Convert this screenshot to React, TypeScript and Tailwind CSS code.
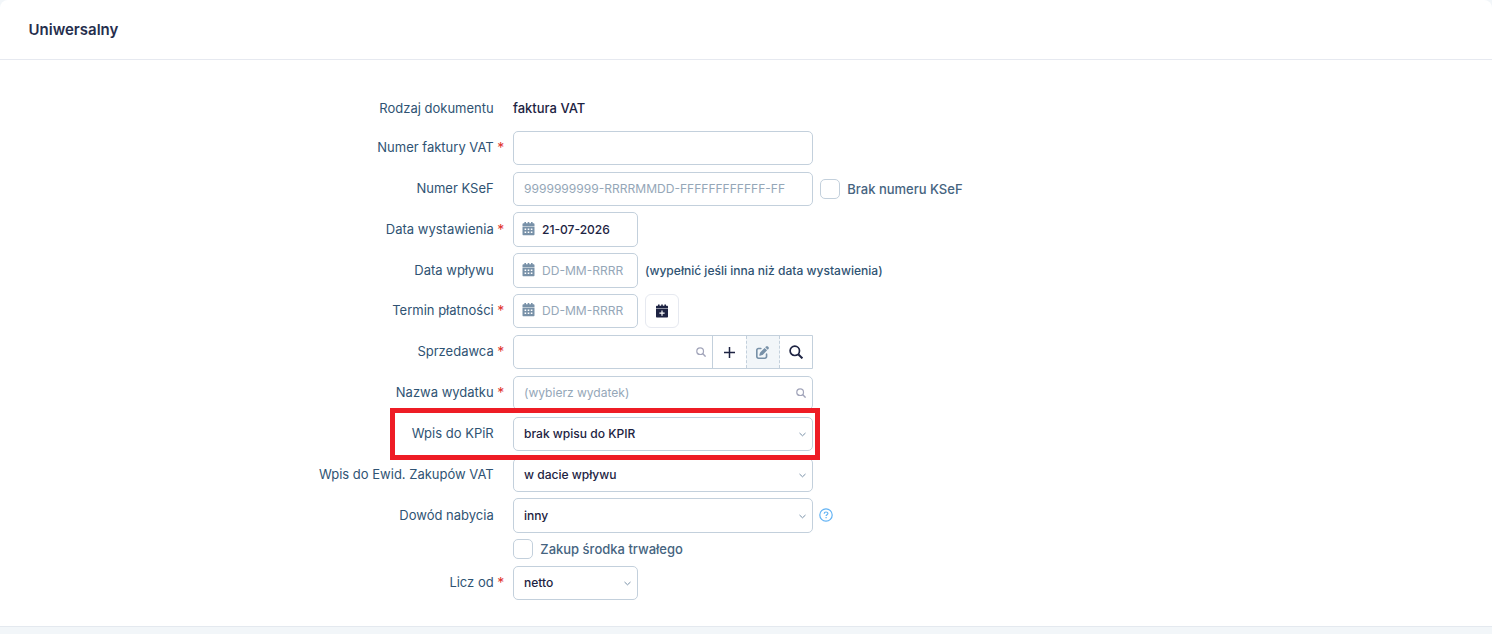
import type { ReactNode } from "react";
import clsx from "clsx";
import { FaPenToSquare } from "react-icons/fa6";

const CalendarIcon = () => (
    <svg width="13" height="14" viewBox="0 0 13 14" className="shrink-0 text-[#7891a8]" fill="currentColor">
        <path
            fillRule="evenodd"
            d="M2.400 0h1.600v1.300h1.700V0h1.600v1.300h1.700V0h1.600v1.300h1c.6 0 .9.3.9.9V4H.5V2.200c0-.6.3-.9.9-.9h1zM.5 4.500h12v7.700c0 .6-.4 1-1 1h-10c-.6 0-1-.4-1-1zM2.600 6.400v1.500h1.600v-1.500zM5.700 6.400v1.500h1.600v-1.500zM8.800 6.400v1.500h1.600v-1.500zM2.600 9.600v1.500h1.600v-1.500zM5.700 9.600v1.500h1.600v-1.500zM8.800 9.600v1.500h1.600v-1.500z"
        />
    </svg>
);

const CalendarPlusIcon = () => (
    <svg width="12" height="14" viewBox="0 0 12 14" fill="currentColor">
        <path
            fillRule="evenodd"
            d="M2 .4h1.600v1.400h1.600V.4h1.600v1.400h1.600V.4H10v1.400h1c.6 0 1 .4 1 1V4.500H0V2.800c0-.6.4-1 1-1h1zM0 5.100h12v7.300c0 .6-.4 1-1 1H1c-.6 0-1-.4-1-1zM5.400 6.600v2H3.400v1.200h2v2h1.200v-2h2V8.600h-2v-2z"
        />
    </svg>
);

const SearchIcon = ({ size, className }: { size: number; className?: string }) => (
    <svg width={size} height={size} viewBox="0 0 14 14" fill="none" stroke="currentColor" strokeWidth="1.7" className={className}>
        <circle cx="5.800" cy="5.800" r="4.700" />
        <path d="M9.200 9.200l4.200 4.200" strokeWidth="2" />
    </svg>
);

const ChevronIcon = () => (
    <svg width="7" height="5" viewBox="0 0 7 5" fill="none" stroke="#7891a8" className="ml-auto shrink-0">
        <path d="M.5 1l3 2.800 3-2.800" />
    </svg>
);

interface RowProps {
    label?: string;
    required?: boolean;
    className?: string;
    labelClassName?: string;
    children: ReactNode;
}

function Row({ label, required, className = "h-[41px]", labelClassName = "leading-[33px]", children }: RowProps) {
    return (
        <div className={clsx("flex items-start", className)}>
            <div className={clsx("flex w-[513px] shrink-0 justify-end text-[13px] text-[#2f5373]", labelClassName)}>
                <span>{label}</span>
                <span className="w-[19.3px] pl-[3.5px] text-[14px] text-[#e0342b]">{required && "*"}</span>
            </div>
            {children}
        </div>
    );
}

const box = "flex shrink-0 items-center rounded-[5px] border border-[#c3d0dc] bg-white";

function Select({ value, className = "h-[34px] w-[300px]" }: { value: string; className?: string }) {
    return (
        <div className={clsx(box, "pl-[10px] pr-[6px] font-medium text-[#1d2342]", className)}>
            {value}
            <ChevronIcon />
        </div>
    );
}

function DateField({ value, className = "h-[35px]" }: { value?: string; className?: string }) {
    return (
        <div className={clsx(box, "w-[125px] gap-[7px] pl-2", className)}>
            <span className="pb-[2px]"><CalendarIcon /></span>
            {value
                ? <span className="pt-px font-medium text-[#1d2342]">{value}</span>
                : <span className="pt-px text-[#95a7b8]">DD-MM-RRRR</span>}
        </div>
    );
}

const Checkbox = ({ label, className }: { label: string; className?: string }) => (
    <label className={clsx("flex items-center gap-[7.300px] text-[13px] font-medium text-[#46647f]", className)}>
        <span className="size-5 rounded-[5px] border border-[#c3d0dc]" />
        <span className="pt-px">{label}</span>
    </label>
);

export default function App() {
    return (
        <div className="h-[634px] overflow-hidden bg-[#f2f6f9] font-['Inter',sans-serif] text-[12.05px]">
            <div className="h-[627px] rounded-t-[8px] border-b border-[#e4e9ef] bg-white">
                <header className="flex h-[60px] items-center border-b border-[#e6e9f0] pt-px pl-[28.5px] text-[15px] font-semibold text-[#262e4d]">
                    <h1>Uniwersalny</h1>
                </header>

                <main className="relative pt-[38px] whitespace-nowrap">
                    <Row label="Rodzaj dokumentu" className="h-[33px]" labelClassName="leading-5">
                        <span className="text-[13px] leading-5 font-medium text-[#1d2342]">faktura VAT</span>
                    </Row>
                    <Row label="Numer faktury VAT" required>
                        <div className={clsx(box, "h-[34px] w-[300px]")} />
                    </Row>
                    <Row label="Numer KSeF" className="h-10">
                        <div className={clsx(box, "h-[34px] w-[300px] pl-[10px] text-[#95a7b8]")}>
                            9999999999-RRRRMMDD-FFFFFFFFFFFF-FF
                        </div>
                        <Checkbox label="Brak numeru KSeF" className="ml-[7px] h-[34px]" />
                    </Row>
                    <Row label="Data wystawienia" required labelClassName="leading-[35px]">
                        <DateField value="21-07-2026" />
                    </Row>
                    <Row label="Data wpływu" labelClassName="leading-[35px]">
                        <DateField />
                        <span className="ml-[7px] leading-[35px] font-medium text-[#2f5373]">
                            (wypełnić jeśli inna niż data wystawienia)
                        </span>
                    </Row>
                    <Row label="Termin płatności" required>
                        <DateField className="h-[34px]" />
                        <button className="ml-[7px] flex size-[34px] items-center justify-center rounded-[6px] border border-[#e6e9f0] text-[#1d2342]">
                            <CalendarPlusIcon />
                        </button>
                    </Row>
                    <Row label="Sprzedawca" required>
                        <div className="flex h-[34px] w-[300px] rounded-l-[5px] border border-[#c3d0dc] text-[#1d2342]">
                            <div className="flex w-[199px] items-center justify-end border-r border-[#c3d0dc] pr-[6px]">
                                <SearchIcon size={10} className="text-[#a2a5ba]" />
                            </div>
                            <button className="flex w-[33px] items-center justify-center">
                                <svg width="11" height="11" viewBox="0 0 11 11" stroke="currentColor" strokeWidth="1.5">
                                    <path d="M5.500 0v11M0 5.500h11" />
                                </svg>
                            </button>
                            <button className="flex w-[34px] items-center justify-center border-x border-dashed border-[#c3d0dc] bg-[#f2f6f9] pr-px text-[#7891a8]">
                                <FaPenToSquare size={13} />
                            </button>
                            <button className="flex flex-1 items-center justify-center">
                                <SearchIcon size={14} />
                            </button>
                        </div>
                    </Row>
                    <Row label="Nazwa wydatku" required>
                        <div className={clsx(box, "h-[34px] w-[300px] justify-between pr-[6px] pl-[10px] text-[#95a7b8]")}>
                            (wybierz wydatek)
                            <SearchIcon size={10} className="text-[#a2a5ba]" />
                        </div>
                    </Row>
                    <Row label="Wpis do KPiR">
                        <Select value="brak wpisu do KPIR" />
                    </Row>
                    <Row label="Wpis do Ewid. Zakupów VAT" className="h-10">
                        <Select value="w dacie wpływu" />
                    </Row>
                    <Row label="Dowód nabycia" labelClassName="leading-[35px]">
                        <Select value="inny" className="h-[35px] w-[300px] pt-px" />
                        <svg width="14" height="14" viewBox="0 0 14 14" fill="none" stroke="#63b3f4" strokeWidth="1.2" className="mt-[10px] ml-[6px]">
                            <circle cx="7" cy="7" r="6.200" />
                            <path d="M5.200 5.700c0-2.300 3.700-2.200 3.700-.2C8.900 6.700 7.100 6.700 7.100 8M7.100 9v1.200" />
                        </svg>
                    </Row>
                    <Row className="h-[27px]">
                        <Checkbox label="Zakup środka trwałego" className="h-5" />
                    </Row>
                    <Row label="Licz od" required className="h-[34px]">
                        <Select value="netto" className="h-[34px] w-[125px]" />
                    </Row>

                    {/* highlight frame around the KPiR row */}
                    <div className="absolute top-[348px] left-[390px] h-[52px] w-[430px] border-5 border-[#ee1c25]" />
                </main>
            </div>
        </div>
    );
}
